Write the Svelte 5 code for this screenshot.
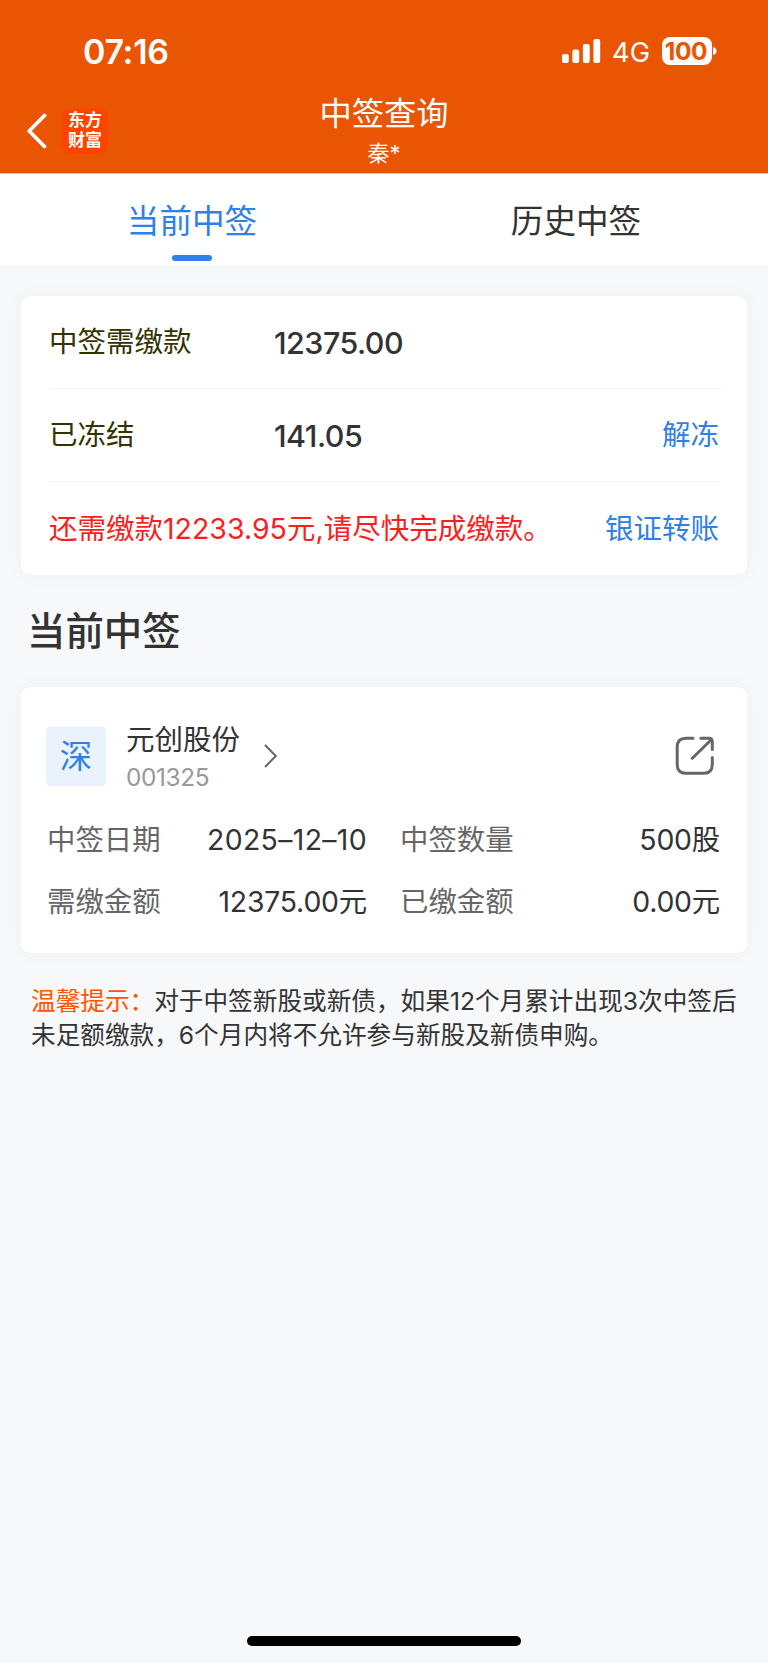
<script>
  const bars = [
    { x: 0, y: 15, h: 9 },
    { x: 10.4, y: 10.5, h: 13.5 },
    { x: 20.9, y: 5, h: 19 },
    { x: 31.4, y: 0, h: 24 }
  ]

  const tabs = ['当前中签', '历史中签']
  let active = $state(0)

  const summary = [
    { label: '中签需缴款', value: '12375.00', action: '' },
    { label: '已冻结', value: '141.05', action: '解冻' }
  ]

  const stock = {
    market: '深',
    name: '元创股份',
    code: '001325',
    fields: [
      { label: '中签日期', value: '2025–12–10', date: true },
      { label: '中签数量', value: '500股' },
      { label: '需缴金额', value: '12375.00元' },
      { label: '已缴金额', value: '0.00元' }
    ]
  }
</script>

<div class="page">
  <header class="header">
    <div class="status">
      <span class="time">07:16</span>
      <div class="indicators">
        <svg class="signal" width="39" height="24" viewBox="0 0 39 24">
          {#each bars as b}
            <rect x={b.x} y={b.y} width="6.8" height={b.h} rx="2" fill="#fff" />
          {/each}
        </svg>
        <span class="network">4G</span>
        <span class="battery">100</span>
        <svg class="tip" width="4" height="10" viewBox="0 0 4 10">
          <path d="M0 1 Q3.6 2 3.6 5 Q3.6 8 0 9Z" fill="#fff" />
        </svg>
      </div>
    </div>

    <div class="nav">
      <div class="nav-left">
        <svg width="20" height="36" viewBox="0 0 20 36">
          <path d="M17.5 2.5 L2.2 18 L17.5 33.5" fill="none" stroke="#fff" stroke-width="3.8" stroke-linecap="round" stroke-linejoin="round" />
        </svg>
        <div class="logo">东方<br />财富</div>
      </div>
      <div class="titles">
        <h1>中签查询</h1>
        <span class="user">秦*</span>
      </div>
    </div>
  </header>

  <nav class="tabs">
    {#each tabs as tab, i}
      <button class="tab" class:active={active === i} onclick={() => (active = i)}>
        <span class="tab-text">{tab}</span>
        <i class="line"></i>
      </button>
    {/each}
  </nav>

  <section class="card summary">
    {#each summary as row}
      <div class="row">
        <span class="row-label">{row.label}</span>
        <span class="row-value">{row.value}</span>
        <span class="link">{row.action}</span>
      </div>
    {/each}
    <div class="row">
      <span class="warn">还需缴款12233.95元,请尽快完成缴款。</span>
      <span class="link">银证转账</span>
    </div>
  </section>

  <h2>当前中签</h2>

  <section class="card stock">
    <div class="stock-head">
      <span class="market">{stock.market}</span>
      <div class="stock-name">
        <span class="name">{stock.name}</span>
        <span class="code">{stock.code}</span>
      </div>
      <svg class="arrow" width="16" height="26" viewBox="0 0 16 26">
        <path d="M2 2 L12.8 13 L2 24" fill="none" stroke="#666" stroke-width="2" />
      </svg>
      <svg class="share" width="40" height="40" viewBox="0 0 40 40" fill="none" stroke="#666" stroke-width="3" stroke-linecap="round" stroke-linejoin="round">
        <path d="M18 2.2 H11 Q2.2 2.2 2.2 11 V28.5 Q2.2 37.3 11 37.3 H28.7 Q37.3 37.3 37.3 28.5 V21.5" />
        <path d="M25.8 2.2 H33.5 Q37.3 2.2 37.3 6 V13.5" />
        <path d="M17.3 22.2 L36 4" />
      </svg>
    </div>
    <div class="fields">
      {#each stock.fields as f}
        <div class="field">
          <span class="field-label">{f.label}</span>
          <span class="field-value" class:date={f.date}>{f.value}</span>
        </div>
      {/each}
    </div>
  </section>

  <p class="notice">
    <span class="notice-title">温馨提示：</span>对于中签新股或新债，如果12个月累计出现3次中签后<br />未足额缴款，6个月内将不允许参与新股及新债申购。
  </p>

  <div class="home"></div>
</div>

<style>
  :global(body) {
    background: #f7f8fa;
  }

  .page {
    width: 768px;
    height: 1663px;
    display: flex;
    flex-direction: column;
    background: #f7f8fa;
    color: #333;
    font-family: Inter, 'Noto Sans CJK SC', sans-serif;
    overflow: hidden;
    white-space: nowrap;
  }

  .header {
    height: 174px;
    box-sizing: border-box;
    flex: none;
    background: #ea5504;
    border-bottom: 1px solid #f9bd9c;
    color: #fff;
  }
  .status {
    height: 94px;
    padding: 8px 51px 0 83px;
    box-sizing: border-box;
    display: flex;
    align-items: center;
    justify-content: space-between;
  }
  .time {
    font-size: 34px;
    font-weight: 600;
    letter-spacing: -0.3px;
  }
  .indicators {
    display: flex;
    align-items: center;
  }
  .network {
    width: 38px;
    margin: 2px 12px 0 11px;
    font-size: 27.3px;
  }
  .battery {
    width: 50px;
    height: 28px;
    border-radius: 8px;
    background: #fff;
    color: #ea5504;
    font-size: 24.5px;
    font-weight: 700;
    line-height: 28px;
    text-align: center;
    text-indent: -2px;
    letter-spacing: -0.4px;
  }
  .tip {
    margin-left: 1px;
  }

  .nav {
    height: 79px;
    display: grid;
    grid-template-columns: 1fr auto 1fr;
  }
  .nav-left {
    height: 74px;
    padding-left: 27px;
    display: flex;
    align-items: center;
    gap: 15px;
  }
  .logo {
    width: 46px;
    height: 46px;
    padding-top: 3px;
    box-sizing: border-box;
    border-radius: 9px;
    background: #ff4400;
    text-align: center;
    font-family: 'Liberation Sans', 'Noto Sans CJK SC', sans-serif;
    font-size: 17px;
    font-weight: 700;
    line-height: 20px;
  }
  .titles {
    padding-top: 1px;
    display: flex;
    flex-direction: column;
    align-items: center;
  }
  h1 {
    margin: 0;
    font-size: 32.3px;
    font-weight: 400;
    line-height: 38px;
  }
  .user {
    font-size: 22px;
    line-height: 40px;
  }

  .tabs {
    height: 91px;
    flex: none;
    display: flex;
    background: #fff;
  }
  .tab {
    flex: 1;
    padding: 0;
    border: 0;
    background: none;
    display: flex;
    flex-direction: column;
    align-items: center;
    justify-content: flex-end;
    font-family: inherit;
    font-size: 32.6px;
    color: #333;
  }
  .tab-text {
    line-height: 64px;
    padding-bottom: 2px;
  }
  .line {
    width: 40px;
    height: 6px;
    margin-bottom: 4px;
    border-radius: 3px;
  }
  .active {
    color: #2f80e8;
  }
  .active .line {
    background: #2f80e8;
  }

  .card {
    margin: 0 21px;
    flex: none;
    box-sizing: border-box;
    border-radius: 10px;
    background: #fff;
    box-shadow: 0 0 20px rgba(0, 0, 0, 0.035);
  }
  .summary {
    height: 279px;
    margin-top: 31px;
    padding: 0 26px 0 28px;
  }
  .row {
    height: 93px;
    padding-right: 2px;
    box-sizing: border-box;
    display: flex;
    align-items: center;
    font-size: 28.5px;
    line-height: 40px;
    border-bottom: 1px solid #f4f4f5;
  }
  .row:last-child {
    border-bottom: 0;
  }
  .row-label {
    width: 225px;
    color: #333300;
  }
  .row-value {
    padding-top: 2px;
    font-size: 30.4px;
    font-weight: 500;
    letter-spacing: -0.5px;
  }
  .link {
    margin-left: auto;
    color: #2f80e8;
  }
  .warn {
    color: #fa1e1e;
  }

  h2 {
    margin: 0 0 0 27px;
    height: 112px;
    font-size: 38.4px;
    font-weight: 500;
    line-height: 113px;
  }

  .stock {
    height: 266px;
    padding: 35px 27px 0 25px;
  }
  .stock-head {
    height: 68px;
    display: flex;
    align-items: center;
  }
  .market {
    width: 60px;
    height: 59px;
    border-radius: 4px;
    background: #eaf3fd;
    color: #2f80e8;
    font-size: 32.4px;
    line-height: 60px;
    text-align: center;
  }
  .stock-name {
    width: 115px;
    margin-left: 20px;
    padding-top: 5px;
    display: flex;
    flex-direction: column;
  }
  .name {
    font-size: 28.5px;
    line-height: 36px;
  }
  .code {
    font-size: 24.4px;
    line-height: 38px;
    color: #999;
    letter-spacing: -0.4px;
  }
  .arrow {
    margin-left: 22px;
  }
  .share {
    margin-left: auto;
    margin-right: 5px;
  }
  .fields {
    margin-top: 19px;
    padding-left: 1px;
    display: grid;
    grid-template-columns: 320px 320px;
    justify-content: space-between;
    grid-auto-rows: 62px;
  }
  .field {
    display: flex;
    align-items: center;
    justify-content: space-between;
    font-size: 28.4px;
    line-height: 40px;
  }
  .field-label {
    color: #666;
  }
  .field-value {
    letter-spacing: -0.2px;
  }
  .date {
    letter-spacing: 0.35px;
  }

  .notice {
    margin: 31px 0 0 31px;
    font-size: 24.65px;
    line-height: 34.4px;
  }
  .notice-title {
    color: #ff5500;
  }

  .home {
    width: 274px;
    height: 10px;
    margin: auto auto 17px;
    border-radius: 5px;
    background: #000;
  }
</style>
